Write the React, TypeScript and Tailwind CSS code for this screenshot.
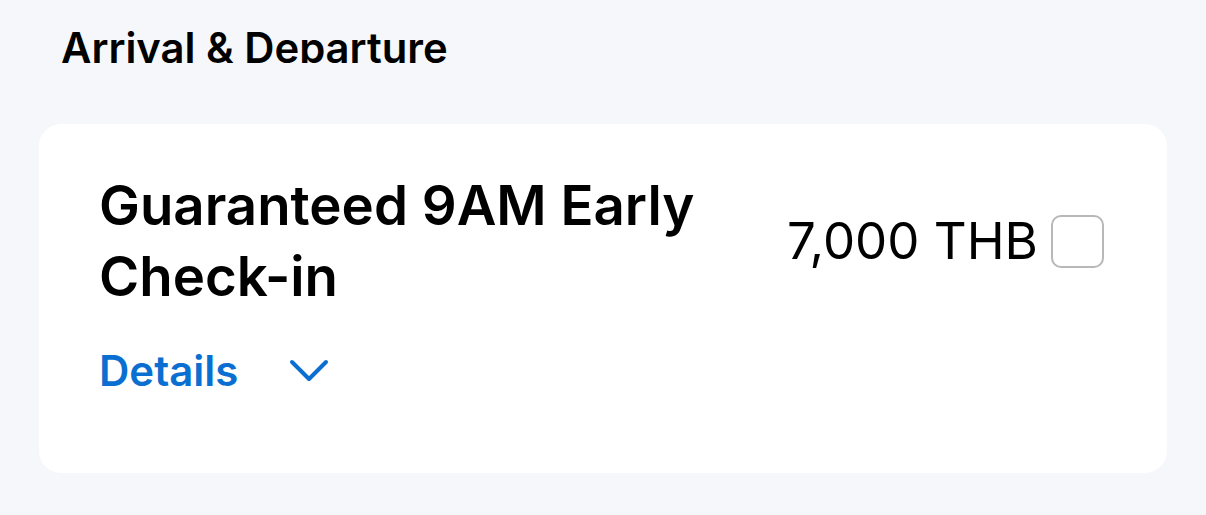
const font = { fontFamily: "Inter, 'Noto Sans', sans-serif" };

export default function App() {
  return (
    <div className="min-h-[515px] w-full bg-[#f6f7fb] text-black" style={font}>
      <div className="h-[63px] overflow-hidden pl-[61px] pt-[23px]">
        <h2 className="text-[41.8px] font-semibold leading-[51px]">
          Arrival &amp; Departure
        </h2>
      </div>

      <div className="px-[39px] pt-[61px]">
        <div className="flex h-[349px] flex-col rounded-[22px] bg-white pl-[60px] pr-[63px] pt-[46px]">
          <div className="flex items-center justify-between">
            <h3 className="max-w-[660px] text-[54.6px] font-semibold leading-[71px]">
              Guaranteed 9AM Early Check-in
            </h3>
            <div className="flex items-center gap-[13px]">
              <span className="text-[51px] font-normal leading-[62px]">7,000 THB</span>
              <span className="h-[53px] w-[53px] rounded-[10px] border-2 border-[#b8b8b8]" />
            </div>
          </div>

          <button className="mt-[33px] flex items-center gap-[51px] self-start text-[#0a6fd1]">
            <span className="text-[42px] font-semibold leading-[51px]">Details</span>
            <svg width="40" height="24" viewBox="0 0 40 24" fill="none">
              <path
                d="M3 3 L20 20 L37 3"
                stroke="currentColor"
                strokeWidth="4"
                strokeLinecap="round"
                strokeLinejoin="round"
              />
            </svg>
          </button>
        </div>
      </div>
    </div>
  );
}
